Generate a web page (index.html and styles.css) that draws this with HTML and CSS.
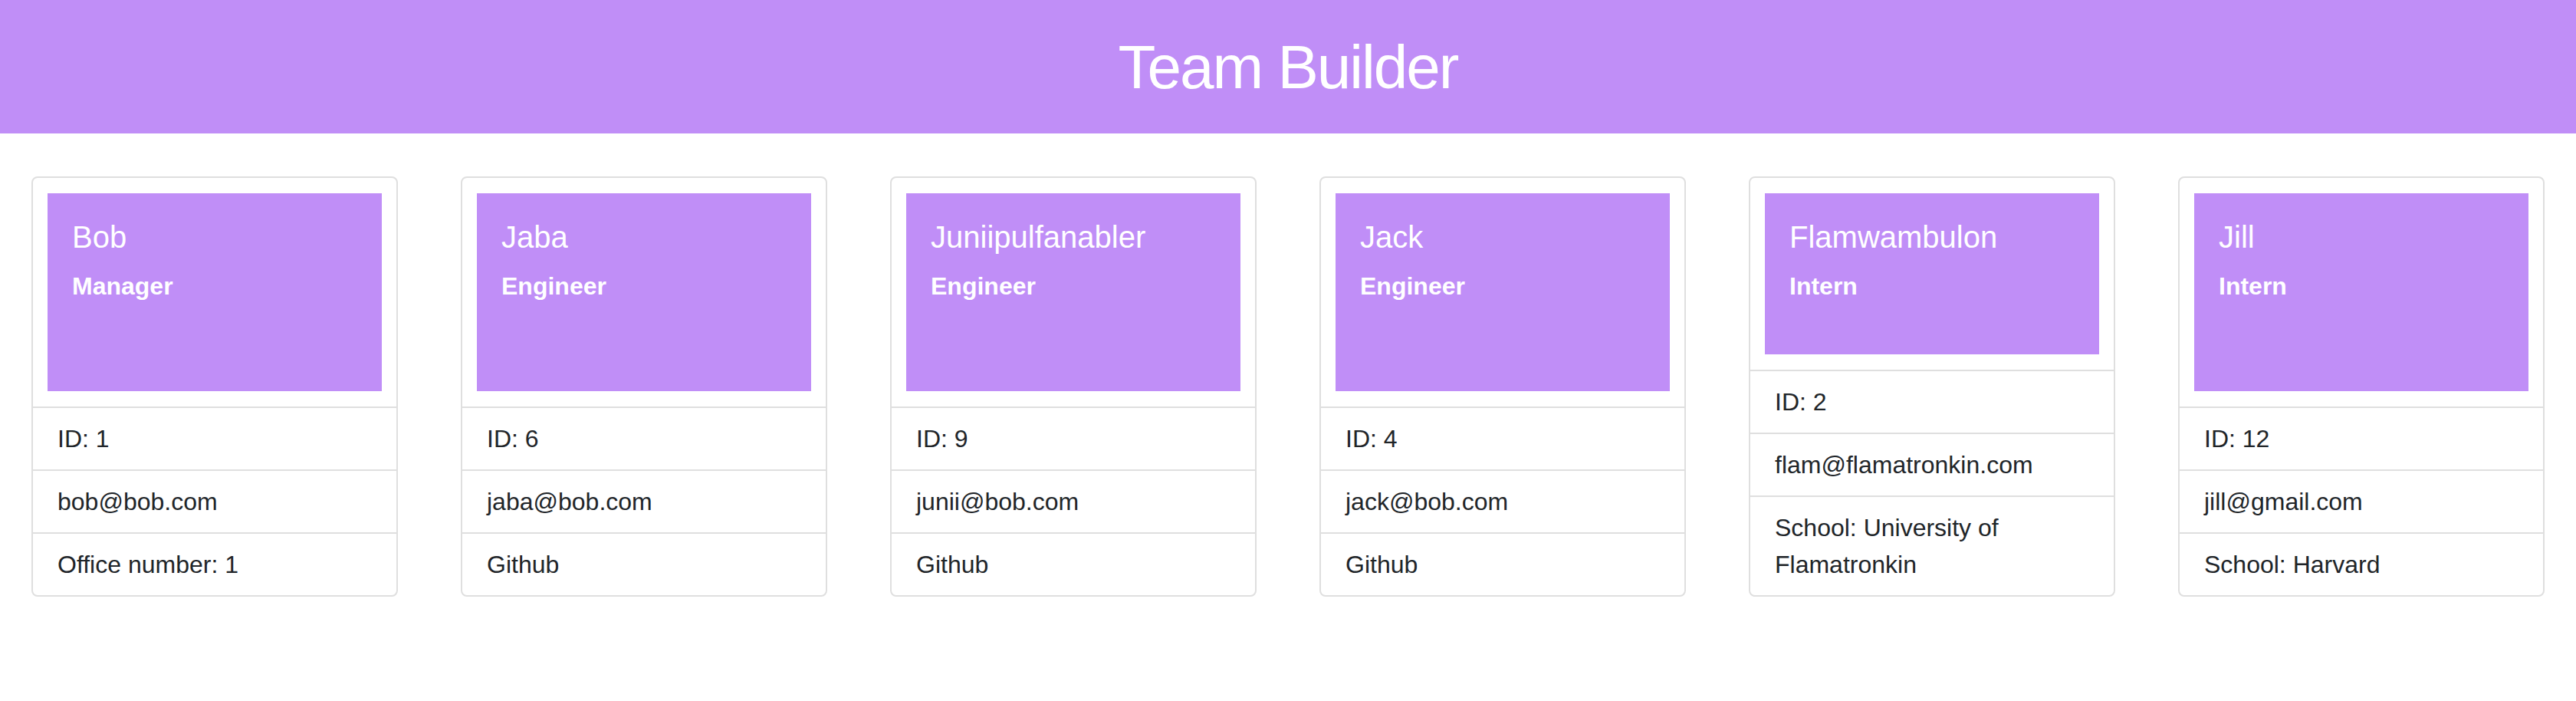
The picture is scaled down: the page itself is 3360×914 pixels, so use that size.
FILE: index.html
```html
<!DOCTYPE html>
<html lang="en">
<head>
<meta charset="utf-8">
<title>Team Builder</title>
<link rel="stylesheet" href="styles.css">
</head>
<body>
<header class="site-header">
  <h1 class="site-title">Team Builder</h1>
</header>
<main class="team">
  <div class="card">
    <div class="card-top"><div class="card-banner"><h5 class="card-name">Bob</h5><h6 class="card-role">Manager</h6></div></div>
    <ul class="card-list">
      <li class="card-item">ID: 1</li>
      <li class="card-item">bob@bob.com</li>
      <li class="card-item">Office number: 1</li>
    </ul>
  </div>
  <div class="card">
    <div class="card-top"><div class="card-banner"><h5 class="card-name">Jaba</h5><h6 class="card-role">Engineer</h6></div></div>
    <ul class="card-list">
      <li class="card-item">ID: 6</li>
      <li class="card-item">jaba@bob.com</li>
      <li class="card-item">Github</li>
    </ul>
  </div>
  <div class="card">
    <div class="card-top"><div class="card-banner"><h5 class="card-name">Juniipulfanabler</h5><h6 class="card-role">Engineer</h6></div></div>
    <ul class="card-list">
      <li class="card-item">ID: 9</li>
      <li class="card-item">junii@bob.com</li>
      <li class="card-item">Github</li>
    </ul>
  </div>
  <div class="card">
    <div class="card-top"><div class="card-banner"><h5 class="card-name">Jack</h5><h6 class="card-role">Engineer</h6></div></div>
    <ul class="card-list">
      <li class="card-item">ID: 4</li>
      <li class="card-item">jack@bob.com</li>
      <li class="card-item">Github</li>
    </ul>
  </div>
  <div class="card">
    <div class="card-top"><div class="card-banner"><h5 class="card-name">Flamwambulon</h5><h6 class="card-role">Intern</h6></div></div>
    <ul class="card-list">
      <li class="card-item">ID: 2</li>
      <li class="card-item">flam@flamatronkin.com</li>
      <li class="card-item">School: University of Flamatronkin</li>
    </ul>
  </div>
  <div class="card">
    <div class="card-top"><div class="card-banner"><h5 class="card-name">Jill</h5><h6 class="card-role">Intern</h6></div></div>
    <ul class="card-list">
      <li class="card-item">ID: 12</li>
      <li class="card-item">jill@gmail.com</li>
      <li class="card-item">School: Harvard</li>
    </ul>
  </div>
</main>
</body>
</html>
```

FILE: styles.css
```css
* { box-sizing: border-box; }

body {
  margin: 0;
  font-family: "Liberation Sans", Arial, sans-serif;
  color: #212529;
  background: #ffffff;
}

.site-header {
  background: #c08ef7;
  height: 174px;
  display: flex;
  align-items: center;
  justify-content: center;
}

.site-title {
  margin: 0;
  color: #ffffff;
  font-size: 80px;
  font-weight: 400;
  line-height: 96px;
  letter-spacing: -2px;
  padding-top: 2px;
}

.team {
  display: grid;
  grid-template-columns: repeat(6, 478px);
  column-gap: 82px;
  padding: 56px 41px 0;
  align-items: stretch;
}

.card {
  display: flex;
  flex-direction: column;
  border: 2px solid #dfdfdf;
  border-radius: 8px;
  background: #ffffff;
  overflow: hidden;
}

.card-top {
  flex: 1;
  display: flex;
  flex-direction: column;
  padding: 20px 19px;
}

.card-banner {
  flex: 1;
  min-height: 210px;
  background: #c08ef7;
  color: #ffffff;
  padding: 33px 32px 32px;
}

.card-name {
  margin: 0 0 21px;
  font-size: 40px;
  font-weight: 400;
  line-height: 48px;
}

.card-role {
  margin: 0;
  font-size: 32px;
  font-weight: 700;
  line-height: 38px;
}

.card-list {
  list-style: none;
  margin: 0;
  padding: 0;
}

.card-item {
  border-top: 2px solid #dfdfdf;
  padding: 16px 32px;
  font-size: 32px;
  line-height: 48px;
}
```
